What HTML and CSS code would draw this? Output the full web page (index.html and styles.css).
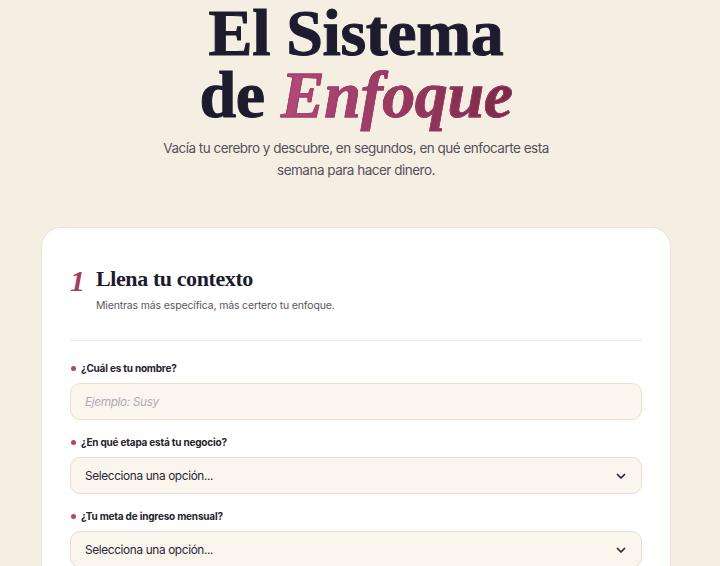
FILE: index.html
```html
<!DOCTYPE html>
<html lang="es">
<head>
<meta charset="utf-8">
<title>El Sistema de Enfoque</title>
<link rel="stylesheet" href="styles.css">
</head>
<body>
<div class="page">
<header class="hero">
  <h1 class="title">El Sistema<br>de <em class="accent">Enfoque</em></h1>
  <p class="lead">Vacía tu cerebro y descubre, en segundos, en qué enfocarte esta semana para hacer dinero.</p>
</header>
<main class="card">
  <div class="step">
    <span class="step-num">1</span>
    <div class="step-text">
      <h2 class="step-title">Llena tu contexto</h2>
      <p class="step-sub">Mientras más específica, más certero tu enfoque.</p>
    </div>
  </div>
  <hr class="divider">
  <div class="field">
    <label class="label"><span class="dot"></span>¿Cuál es tu nombre?</label>
    <div class="input"><span class="placeholder">Ejemplo: Susy</span></div>
  </div>
  <div class="field">
    <label class="label"><span class="dot"></span>¿En qué etapa está tu negocio?</label>
    <div class="input select"><span>Selecciona una opción...</span>
      <svg class="chev" width="12" height="12" viewBox="0 0 12 12"><path d="M2.5 4.5 L6 8 L9.5 4.5" fill="none" stroke="#2a2633" stroke-width="1.7" stroke-linecap="round" stroke-linejoin="round"/></svg>
    </div>
  </div>
  <div class="field">
    <label class="label"><span class="dot"></span>¿Tu meta de ingreso mensual?</label>
    <div class="input select"><span>Selecciona una opción...</span>
      <svg class="chev" width="12" height="12" viewBox="0 0 12 12"><path d="M2.5 4.5 L6 8 L9.5 4.5" fill="none" stroke="#2a2633" stroke-width="1.7" stroke-linecap="round" stroke-linejoin="round"/></svg>
    </div>
  </div>
</main>
</div>
</body>
</html>
```
FILE: styles.css
```css
html, body {
  margin: 0;
  padding: 0;
}
body {
  background: #f5efe3;
  font-family: Inter, "Noto Sans", sans-serif;
  color: #1e1b2e;
}
.page {
  padding-right: 8px;
}
.hero {
  text-align: center;
}
.title {
  margin: 0;
  font-family: "Liberation Serif", "Times New Roman", serif;
  font-weight: 700;
  font-size: 66px;
  line-height: 62px;
  color: #1e1b2e;
  letter-spacing: -0.4px;
  padding-top: 2px;
  -webkit-text-stroke: 1px #1e1b2e;
}
.accent {
  font-style: italic;
  background: linear-gradient(90deg, #b4497a 0%, #7b2946 100%);
  -webkit-background-clip: text;
  background-clip: text;
  color: transparent;
  -webkit-text-stroke: 0.8px #9b3a63;
}
.lead {
  margin: 11px auto 0;
  width: 420px;
  font-size: 13.5px;
  line-height: 22px;
  letter-spacing: -0.5px;
  color: #55505c;
}
.card {
  box-sizing: border-box;
  width: 630px;
  margin: 46px auto 0;
  background: #ffffff;
  border: 1px solid #ebe3d1;
  border-radius: 20px;
  padding: 37px 28px 40px;
  min-height: 400px;
}
.step {
  display: flex;
  align-items: flex-start;
  gap: 14px;
}
.step-num {
  font-family: "Liberation Serif", serif;
  font-style: italic;
  font-weight: 700;
  font-size: 30px;
  line-height: 30px;
  color: #a23c63;
  width: 12px;
  padding-top: 1px;
}
.step-title {
  margin: 0;
  font-family: "Liberation Serif", serif;
  font-weight: 700;
  font-size: 22px;
  line-height: 28px;
  color: #1e1b2e;
  letter-spacing: -0.4px;
}
.step-sub {
  margin: 5px 0 0;
  font-size: 10.5px;
  line-height: 16px;
  letter-spacing: -0.15px;
  color: #5a5562;
}
.divider {
  border: 0;
  border-top: 1px solid #f1ebdf;
  margin: 26px 0 19px;
}
.field {
  margin-bottom: 14px;
}
.label {
  display: flex;
  align-items: center;
  gap: 5px;
  font-size: 10px;
  font-weight: 650;
  color: #26222f;
  line-height: 16px;
  letter-spacing: -0.2px;
  padding-left: 1px;
}
.dot {
  width: 5px;
  height: 5px;
  border-radius: 50%;
  background: #b4436d;
}
.input {
  box-sizing: border-box;
  height: 37px;
  margin-top: 7px;
  background: #faf6ee;
  border: 1px solid #eae0c9;
  border-radius: 10px;
  display: flex;
  align-items: center;
  padding: 0 14px;
  font-size: 11.8px;
  letter-spacing: -0.35px;
  color: #2a2633;
}
.placeholder {
  font-style: italic;
  color: #b1a9b9;
}
.select {
  justify-content: space-between;
}
.chev {
  display: block;
}
```
